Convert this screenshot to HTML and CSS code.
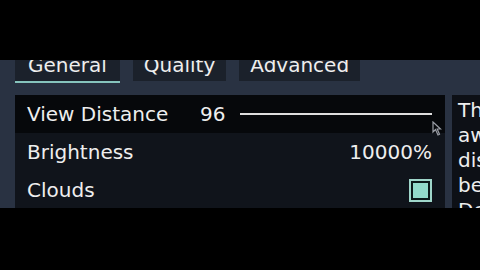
FILE: index.html
```html
<!DOCTYPE html>
<html lang="en">
<head>
    <meta charset="UTF-8">
    <title>Video Settings</title>
    <link rel="stylesheet" href="styles.css">
</head>
<body>
    <div class="frame">
        <div class="tabs">
            <div class="tab active">General</div>
            <div class="tab">Quality</div>
            <div class="tab">Advanced</div>
        </div>

        <div class="content">
            <div class="options">
                <div class="row hover">
                    <span class="label">View Distance</span>
                    <span class="value">96</span>
                    <div class="slider"></div>
                    <!-- mouse pointer -->
                    <svg class="cursor" width="10" height="15" viewBox="0 0 10 15">
                        <path d="M1 1 L1 11 L3.5 8.5 L6 14 L7.5 13.3 L5.2 8 L8.5 8 Z" fill="none" stroke="#9a9ea6" stroke-width="1.2"/>
                    </svg>
                </div>
                <div class="row">
                    <span class="label">Brightness</span>
                    <span class="value right">10000%</span>
                </div>
                <div class="row">
                    <span class="label">Clouds</span>
                    <span class="checkbox"><span class="check-fill"></span></span>
                </div>
            </div>

            <div class="description">
                The render distance controls how far<br>
                away terrain will be rendered and<br>
                displayed. Shorter distances may<br>
                be better for performance.<br>
                Default: 12
            </div>
        </div>
    </div>
</body>
</html>
```

FILE: styles.css
```css
body { margin: 0; width: 480px; height: 270px; background: #000; overflow: hidden; font-family: "DejaVu Sans", sans-serif; font-size: 20px; color: #eeeeee; }
.frame { margin-top: 60px; height: 148px; background: #293242; overflow: hidden; padding-left: 15px; }

.tabs { display: flex; align-items: flex-start; gap: 13px; margin-top: -12px; margin-bottom: 12px; }
.tab { height: 33px; display: flex; align-items: center; padding: 0 11px; background: #1b212b; }
.tab.active { border-bottom: 2px solid #86c4bd; padding: 0 13px; }

.content { display: flex; gap: 7px; }
.options { width: 430px; flex-shrink: 0; background: #10141b; height: 114px; }
.row { position: relative; height: 38px; display: flex; align-items: center; padding: 0 13px 0 12px; }
.row.hover { background: #06080b; }
.label { width: 173px; flex-shrink: 0; }
.value { width: 40px; flex-shrink: 0; }
.value.right { width: auto; margin-left: auto; }
.slider { flex: 1; height: 2px; background: #dedede; }
.cursor { position: absolute; right: 3px; top: 26px; }

.checkbox { margin-left: auto; width: 23px; height: 23px; box-sizing: border-box; border: 2px solid #9fd6ca; padding: 2px; background: #0c1a1a; }
.check-fill { display: block; width: 100%; height: 100%; background: #93dccb; }

.description { flex-shrink: 0; width: 360px; background: #0d1016; padding: 3px 6px; line-height: 25px; white-space: nowrap; height: 120px; }
```
